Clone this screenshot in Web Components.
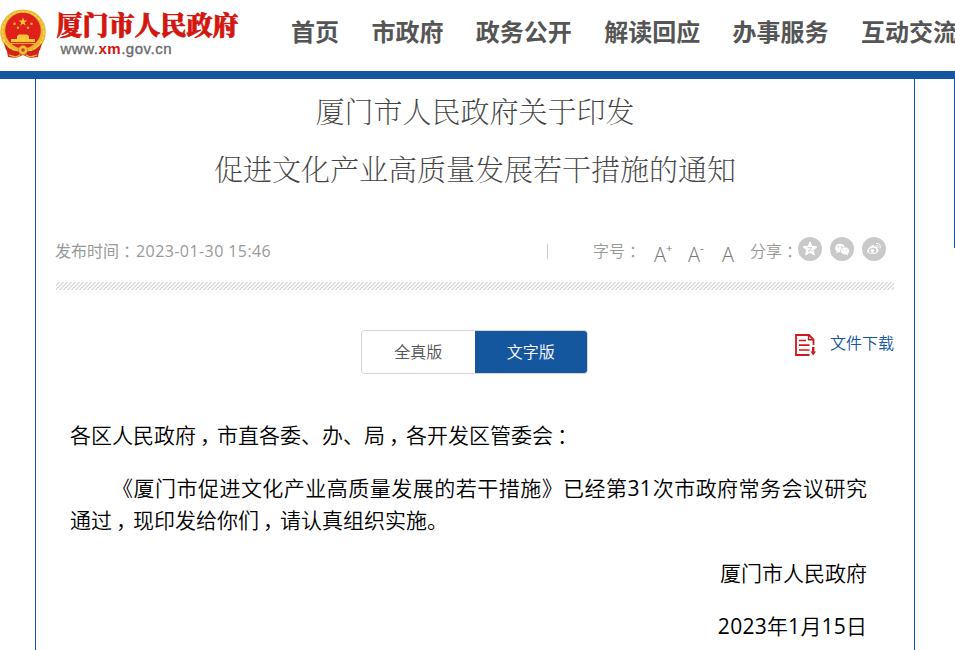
<!DOCTYPE html>
<html lang="zh-CN">
<head>
<meta charset="utf-8">
<title>厦门市人民政府</title>
<style>
    body{
        margin: 0;
        height: 650px;
        overflow: hidden;
        background: #fff;
        font-family: "Open Sans", "Noto Sans CJK SC", sans-serif;
        text-spacing-trim: space-all;
        --blue: #15579f;
    }
</style>
</head>
<body>
<gov-header></gov-header>
<gov-page>
    <doc-title>
        <div>厦门市人民政府关于印发</div>
        <div>促进文化产业高质量发展若干措施的通知</div>
    </doc-title>
    <doc-meta time="2023-01-30 15:46"></doc-meta>
    <doc-tabs></doc-tabs>
    <doc-content></doc-content>
</gov-page>
<script>
class GovEmblem extends HTMLElement
{
    constructor() {
        super()
        this._shadowRoot = this.attachShadow({ mode: 'open' })
    }
    connectedCallback(){
        this._shadowRoot.innerHTML =
        `
            <style>
                :host{ display: block; width: 46px; height: 50px; }
                svg{ display: block; }
            </style>
            <svg width="46" height="50" viewBox="0 0 46 50">
                <path d="M6 37 L8 48 L16 49 L23 46 L30 49 L38 48 L40 37 Z" fill="#d8261a"/>
                <ellipse cx="23" cy="23" rx="22.8" ry="22.6" fill="#e9b62d"/>
                <ellipse cx="23" cy="23" rx="20.6" ry="20.4" fill="none" stroke="#f6d357" stroke-width="1.6" stroke-dasharray="3 1.5"/>
                <circle cx="23" cy="21.5" r="17.8" fill="#e0201a"/>
                <path d="M23 8.5 L24.1 11.6 L27.3 11.6 L24.7 13.6 L25.7 16.7 L23 14.8 L20.3 16.7 L21.3 13.6 L18.7 11.6 L21.9 11.6 Z" fill="#f9c92e"/>
                <g fill="#f4b32a">
                    <circle cx="14.5" cy="14.7" r="1.3"/><circle cx="18" cy="18.7" r="1.3"/>
                    <circle cx="28" cy="18.7" r="1.3"/><circle cx="31.5" cy="14.7" r="1.3"/>
                </g>
                <path d="M17 27 L19 25.5 H27 L29 27 V30 H35 V33 H11 V30 H17 Z" fill="#f7c63a"/>
                <path d="M9 34.5 H37" stroke="#f2a928" stroke-width="1.2"/>
                <path d="M4 34 Q12 44 20 42 L23 39 L26 42 Q34 44 42 34 L40 41 Q33 47 25 45 L23 43 L21 45 Q13 47 6 41 Z" fill="#cf2219"/>
                <circle cx="23" cy="41" r="4.5" fill="#efc03c" stroke="#c58b1b" stroke-width=".7"/>
                <circle cx="23" cy="41" r="1.8" fill="#d9371d"/>
                <path d="M9 46 L16 48 L20 46 M37 46 L30 48 L26 46" stroke="#eec04a" stroke-width="1.3" fill="none"/>
            </svg>
        `
    }
}
window.customElements.define('gov-emblem', GovEmblem)

class GovHeader extends HTMLElement
{
    constructor() {
        super()
        this._shadowRoot = this.attachShadow({ mode: 'open' })
    }
    connectedCallback(){
        const items = ['首页', '市政府', '政务公开', '解读回应', '办事服务', '互动交流']
        this._shadowRoot.innerHTML =
        `
            <style>
                :host{
                    display: flex;
                    height: 71px;
                    border-bottom: 8px solid var(--blue);
                    overflow: hidden;
                    white-space: nowrap;
                }
                .logo{
                    display: flex;
                    flex: none;
                    width: 291px;
                    padding-top: 8.5px;
                    gap: 10.5px;
                    box-sizing: border-box;
                }
                .name{
                    color: #d2170f;
                    height: 32px;
                    font: 900 26px/30px "Noto Serif CJK SC", "Noto Sans CJK SC", sans-serif;
                    -webkit-text-stroke: .7px #d2170f;
                }
                .url{
                    color: #6a6a6a;
                    font: 15px/16px "Liberation Sans", Arial, sans-serif;
                    letter-spacing: .52px;
                    padding-left: 4px;
                    -webkit-text-stroke: .35px;
                }
                .url b{ color: #d2170f; -webkit-text-stroke: 0; }
                nav{
                    display: flex;
                    gap: 32.4px;
                    color: #555;
                    font: bold 24px/62px "Noto Sans CJK SC", sans-serif;
                }
                nav span{ flex: none; }
            </style>
            <div class="logo">
                <gov-emblem></gov-emblem>
                <div>
                    <div class="name">厦门市人民政府</div>
                    <div class="url">www.<b>xm</b>.gov.cn</div>
                </div>
            </div>
            <nav>${items.map(t => `<span>${t}</span>`).join('')}</nav>
        `
    }
}
window.customElements.define('gov-header', GovHeader)

class GovPage extends HTMLElement
{
    constructor() {
        super()
        this._shadowRoot = this.attachShadow({ mode: 'open' })
    }
    connectedCallback(){
        this._shadowRoot.innerHTML =
        `
            <style>
                :host{
                    display: flex;
                    justify-content: space-between;
                    height: 571px;
                    padding-left: 35px;
                }
                main{
                    width: 880px;
                    box-sizing: border-box;
                    border: solid var(--blue);
                    border-width: 0 1px;
                    padding: 3px 20px 0;
                }
                aside{ width: 1px; height: 169px; background: var(--blue); }
            </style>
            <main><slot></slot></main>
            <aside></aside>
        `
    }
}
window.customElements.define('gov-page', GovPage)

class DocTitle extends HTMLElement
{
    constructor() {
        super()
        this._shadowRoot = this.attachShadow({ mode: 'open' })
    }
    connectedCallback(){
        this._shadowRoot.innerHTML =
        `
            <style>
                :host{
                    display: block;
                    height: 118px;
                    text-align: center;
                    color: #444;
                    font: 200 29px/58px "Noto Serif CJK SC", "Noto Sans CJK SC", sans-serif;
                }
            </style>
            <slot></slot>
        `
    }
}
window.customElements.define('doc-title', DocTitle)

class DocMeta extends HTMLElement
{
    constructor() {
        super()
        this._shadowRoot = this.attachShadow({ mode: 'open' })
    }
    connectedCallback(){
        this._shadowRoot.innerHTML =
        `
            <style>
                :host{ display: block; color: #999; font-size: 16px; font-weight: 350; }
                .row{
                    display: flex;
                    height: 82px;
                    padding-top: 32px;
                    box-sizing: border-box;
                    line-height: 39px;
                    white-space: nowrap;
                }
                i{ font-style: normal; font-feature-settings: "halt"; margin: 0 4px; }
                .time{ width: 491px; font-weight: 400; }
                .time{ margin-left: -1px; padding-right: 1px; }
                .time span{ letter-spacing: .42px; margin-left: 1px; }
                .line{ width: 1px; height: 15px; margin: 12px 45px 0 0; background: #ccc; flex: none; }
                .size{ width: 157px; display: flex; flex: none; }
                .size span{
                    flex: none;
                    color: #777;
                    width: 34px;
                    font: 300 20px/45px "Open Sans", sans-serif;
                }
                .size span:first-of-type{ margin-left: 13px; }
                .size sup{ font-size: 11px; line-height: 0; vertical-align: 10px; font-weight: 400; }
                .share{ display: flex; }
                svg{ flex: none; margin: 5px 8px 0 0; }
                .stripe{
                    height: 8px;
                    background: repeating-linear-gradient(135deg, #fff 0 1.5px, #dedede 1.5px 2.83px);
                }
            </style>
            <div class="row">
                <div class="time">发布时间<i>：</i><span>${this.getAttribute('time')}</span></div>
                <div class="line"></div>
                <div class="size">字号<i>：</i><span>A<sup>+</sup></span><span>A<sup>-</sup></span><span>A</span></div>
                <div class="share">分享<i>：</i>
                    <svg width="24" height="24" viewBox="0 0 24 24">
                        <circle cx="12" cy="12" r="12" fill="#c9c9c9"/>
                        <path d="M12 4.8 L14 9.3 L19 9.8 L15.3 13.1 L16.4 18 L12 15.5 L7.6 18 L8.7 13.1 L5 9.8 L10 9.3 Z" fill="#fff" stroke="#fff" stroke-linejoin="round"/>
                        <path d="M9.5 10.6 H14 L10.3 13.8 H14.8" stroke="#c9c9c9" stroke-width=".8" fill="none"/>
                    </svg>
                    <svg width="24" height="24" viewBox="0 0 24 24">
                        <circle cx="12" cy="12" r="12" fill="#c9c9c9"/>
                        <path d="M6.5 14.5 L6 16.5 L9 15 Z" fill="#fff"/>
                        <ellipse cx="10" cy="11" rx="5" ry="4.3" fill="#fff"/>
                        <ellipse cx="15" cy="14" rx="4.5" ry="3.9" fill="#fff" stroke="#c9c9c9" stroke-width=".7"/>
                        <path d="M16 17.5 L18 18.5 L18 16.5 Z" fill="#fff"/>
                        <g fill="#c9c9c9"><circle cx="8.3" cy="9.8" r=".7"/><circle cx="11.7" cy="9.8" r=".7"/><circle cx="13.6" cy="13" r=".6"/><circle cx="16.5" cy="13" r=".6"/></g>
                    </svg>
                    <svg width="24" height="24" viewBox="0 0 24 24">
                        <circle cx="12" cy="12" r="12" fill="#c9c9c9"/>
                        <path d="M10.6 8.2 C12 7.6 12.6 8.6 12.2 9.8 C14.4 9 15.6 9.6 15 11.2 C17 12 17 13.8 15.2 15.4 C12.4 17.8 6.6 17.6 5.4 14.8 C4.6 12.8 8 9.2 10.6 8.2 Z" fill="#fff"/>
                        <ellipse cx="10.7" cy="13.6" rx="3.9" ry="2.7" fill="#c9c9c9" transform="rotate(-8 10.7 13.6)"/>
                        <circle cx="10.3" cy="13.8" r="1.9" fill="#fff"/>
                        <path d="M14.4 6.5 C17.2 6 19 8.2 18.1 11 M14.7 8.7 C16.2 8.5 16.7 9.3 16.3 10.4" stroke="#fff" stroke-width="1" fill="none" stroke-linecap="round"/>
                    </svg>
                </div>
            </div>
            <div class="stripe"></div>
        `
    }
}
window.customElements.define('doc-meta', DocMeta)

class DocTabs extends HTMLElement
{
    constructor() {
        super()
        this._shadowRoot = this.attachShadow({ mode: 'open' })
    }
    connectedCallback(){
        this._shadowRoot.innerHTML =
        `
            <style>
                :host{
                    display: flex;
                    justify-content: space-between;
                    height: 44px;
                    margin-top: 40px;
                    padding-left: 305px;
                    font-size: 16px;
                    font-weight: 350;
                }
                .tabs{
                    display: flex;
                    width: 227px;
                    box-sizing: border-box;
                    border: 1px solid #d5d5d5;
                    border-radius: 4px;
                    overflow: hidden;
                    text-align: center;
                    line-height: 42px;
                    color: #555;
                }
                .tabs div{ flex: 1; }
                .tabs .on{ background: var(--blue); color: #fff; }
                .down{ display: flex; gap: 14px; color: var(--blue); line-height: 26px; }
                svg{ margin-top: 4px; }
            </style>
            <div class="tabs"><div>全真版</div><div class="on">文字版</div></div>
            <div class="down">
                <svg width="21" height="22" viewBox="0 0 21 22" fill="none" stroke="#d4151b">
                    <path d="M18.5 11 V5.5 L14 1 H1 V21 H14.5" stroke-width="1.8"/>
                    <path d="M13.6 1 V5.8 H18.5" stroke-width="1.4"/>
                    <path d="M4 6.5 H11 M4 11.2 H14.5 M4 16 H14.5" stroke-width="1.7"/>
                    <path d="M18.2 13 V18" stroke-width="2.4"/>
                    <path d="M15.5 17.5 H21 L18.2 21.5 Z" fill="#d4151b" stroke="none"/>
                </svg>
                <span>文件下载</span>
            </div>
        `
    }
}
window.customElements.define('doc-tabs', DocTabs)

class DocContent extends HTMLElement
{
    constructor() {
        super()
        this._shadowRoot = this.attachShadow({ mode: 'open' })
    }
    connectedCallback(){
        this._shadowRoot.innerHTML =
        `
            <style>
                :host{
                    display: block;
                    margin: 45px 27px 0 14px;
                    color: #000;
                    font-size: 21px;
                    font-weight: 350;
                    line-height: 32px;
                }
                p{ margin: 0 0 21px; }
                .text{ text-indent: 42px; text-align: justify; }
                .sign{ text-align: right; }
                .n{ letter-spacing: .3px; font-weight: 400; }
                /* centred comma and colon */
                i{ font-style: normal; font-feature-settings: "halt"; margin: 0 6.5px 0 4px; }
            </style>
            <p>各区人民政府<i>，</i>市直各委、办、局<i>，</i>各开发区管委会<i>：</i></p>
            <p class="text">《厦门市促进文化产业高质量发展的若干措施》已经第<span class="n">31</span>次市政府常务会议研究通过<i>，</i>现印发给你们<i>，</i>请认真组织实施。</p>
            <p class="sign">厦门市人民政府</p>
            <p class="sign"><span class="n">2023</span>年<span class="n">1</span>月<span class="n">15</span>日</p>
        `
    }
}
window.customElements.define('doc-content', DocContent)
</script>
</body>
</html>
